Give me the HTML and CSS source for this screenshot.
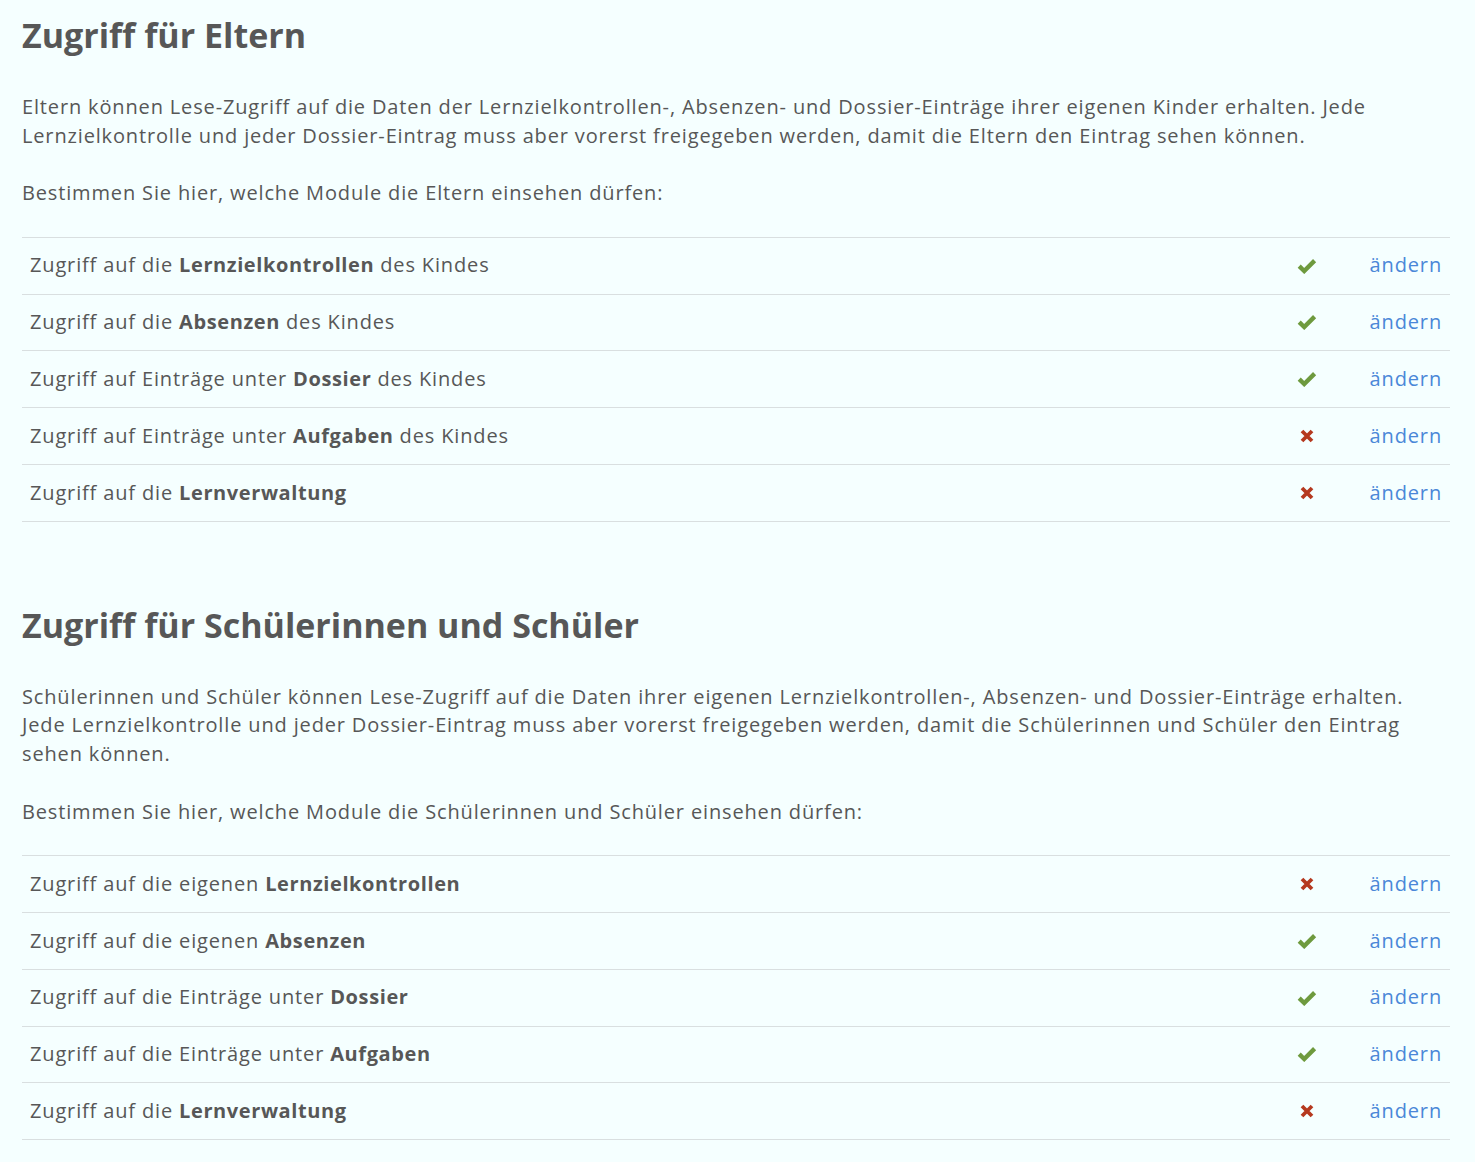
FILE: index.html
```html
<!DOCTYPE html>
<html lang="de">
<head>
<meta charset="utf-8">
<title>Zugriff</title>
<link rel="stylesheet" href="styles.css">
</head>
<body>
<main class="page">
  <section class="block">
    <h1 class="title">Zugriff für Eltern</h1>
    <p class="text">Eltern können Lese-Zugriff auf die Daten der Lernzielkontrollen-, Absenzen- und Dossier-Einträge ihrer eigenen Kinder erhalten. Jede Lernzielkontrolle und jeder Dossier-Eintrag muss aber vorerst freigegeben werden, damit die Eltern den Eintrag sehen können.</p>
    <p class="text">Bestimmen Sie hier, welche Module die Eltern einsehen dürfen:</p>
    <div class="perm">
      <div class="row"><div class="label">Zugriff auf die <b>Lernzielkontrollen</b> des Kindes</div><div class="state"><svg class="ok" viewBox="0 0 20 16" width="20" height="16"><polyline points="2.2,8.2 7.2,13 17.6,2.6"/></svg></div><div class="act"><a href="#">ändern</a></div></div>
      <div class="row"><div class="label">Zugriff auf die <b>Absenzen</b> des Kindes</div><div class="state"><svg class="ok" viewBox="0 0 20 16" width="20" height="16"><polyline points="2.2,8.2 7.2,13 17.6,2.6"/></svg></div><div class="act"><a href="#">ändern</a></div></div>
      <div class="row"><div class="label">Zugriff auf Einträge unter <b>Dossier</b> des Kindes</div><div class="state"><svg class="ok" viewBox="0 0 20 16" width="20" height="16"><polyline points="2.2,8.2 7.2,13 17.6,2.6"/></svg></div><div class="act"><a href="#">ändern</a></div></div>
      <div class="row"><div class="label">Zugriff auf Einträge unter <b>Aufgaben</b> des Kindes</div><div class="state"><svg class="no" viewBox="0 0 14 14" width="14" height="14"><path d="M2 2L12 12M12 2L2 12"/></svg></div><div class="act"><a href="#">ändern</a></div></div>
      <div class="row"><div class="label">Zugriff auf die <b>Lernverwaltung</b></div><div class="state"><svg class="no" viewBox="0 0 14 14" width="14" height="14"><path d="M2 2L12 12M12 2L2 12"/></svg></div><div class="act"><a href="#">ändern</a></div></div>
    </div>
  </section>
  <section class="block">
    <h1 class="title">Zugriff für Schülerinnen und Schüler</h1>
    <p class="text">Schülerinnen und Schüler können Lese-Zugriff auf die Daten ihrer eigenen Lernzielkontrollen-, Absenzen- und Dossier-Einträge erhalten. Jede Lernzielkontrolle und jeder Dossier-Eintrag muss aber vorerst freigegeben werden, damit die Schülerinnen und Schüler den Eintrag sehen können.</p>
    <p class="text">Bestimmen Sie hier, welche Module die Schülerinnen und Schüler einsehen dürfen:</p>
    <div class="perm">
      <div class="row"><div class="label">Zugriff auf die eigenen <b>Lernzielkontrollen</b></div><div class="state"><svg class="no" viewBox="0 0 14 14" width="14" height="14"><path d="M2 2L12 12M12 2L2 12"/></svg></div><div class="act"><a href="#">ändern</a></div></div>
      <div class="row"><div class="label">Zugriff auf die eigenen <b>Absenzen</b></div><div class="state"><svg class="ok" viewBox="0 0 20 16" width="20" height="16"><polyline points="2.2,8.2 7.2,13 17.6,2.6"/></svg></div><div class="act"><a href="#">ändern</a></div></div>
      <div class="row"><div class="label">Zugriff auf die Einträge unter <b>Dossier</b></div><div class="state"><svg class="ok" viewBox="0 0 20 16" width="20" height="16"><polyline points="2.2,8.2 7.2,13 17.6,2.6"/></svg></div><div class="act"><a href="#">ändern</a></div></div>
      <div class="row"><div class="label">Zugriff auf die Einträge unter <b>Aufgaben</b></div><div class="state"><svg class="ok" viewBox="0 0 20 16" width="20" height="16"><polyline points="2.2,8.2 7.2,13 17.6,2.6"/></svg></div><div class="act"><a href="#">ändern</a></div></div>
      <div class="row"><div class="label">Zugriff auf die <b>Lernverwaltung</b></div><div class="state"><svg class="no" viewBox="0 0 14 14" width="14" height="14"><path d="M2 2L12 12M12 2L2 12"/></svg></div><div class="act"><a href="#">ändern</a></div></div>
    </div>
  </section>
</main>
</body>
</html>
```
FILE: styles.css
```css
html, body {
  margin: 0;
  padding: 0;
  background: #f5ffff;
}
body {
  font-family: "Open Sans", "Noto Sans", sans-serif;
  color: #575757;
  font-size: 20px;
  line-height: 28.6px;
  letter-spacing: 0.85px;
}
.page {
  padding: 15px 25px 0 22px;
}
.block + .block {
  margin-top: 83px;
}
.title {
  margin: 0 0 38px;
  font-size: 34px;
  line-height: 40px;
  font-weight: 700;
  letter-spacing: 0;
  color: #575757;
}
.text {
  margin: 0 0 29px;
}
.perm {
  border-bottom: 1px solid #d9dfe0;
}
.row {
  display: grid;
  grid-template-columns: 1fr 86px 100px;
  align-items: center;
  height: 55.8px;
  border-top: 1px solid #d9dfe0;
}
.label {
  padding-left: 8px;
}
.label b {
  font-weight: 700;
  letter-spacing: 0.6px;
}
.state {
  display: flex;
  justify-content: center;
  align-items: center;
}
.ok polyline {
  fill: none;
  stroke: #6e9a3e;
  stroke-width: 4.4;
}
.no path {
  fill: none;
  stroke: #b5391f;
  stroke-width: 3.8;
}
.act {
  text-align: right;
  padding-right: 8px;
}
.act a {
  color: #4a87d8;
  text-decoration: none;
}
```
